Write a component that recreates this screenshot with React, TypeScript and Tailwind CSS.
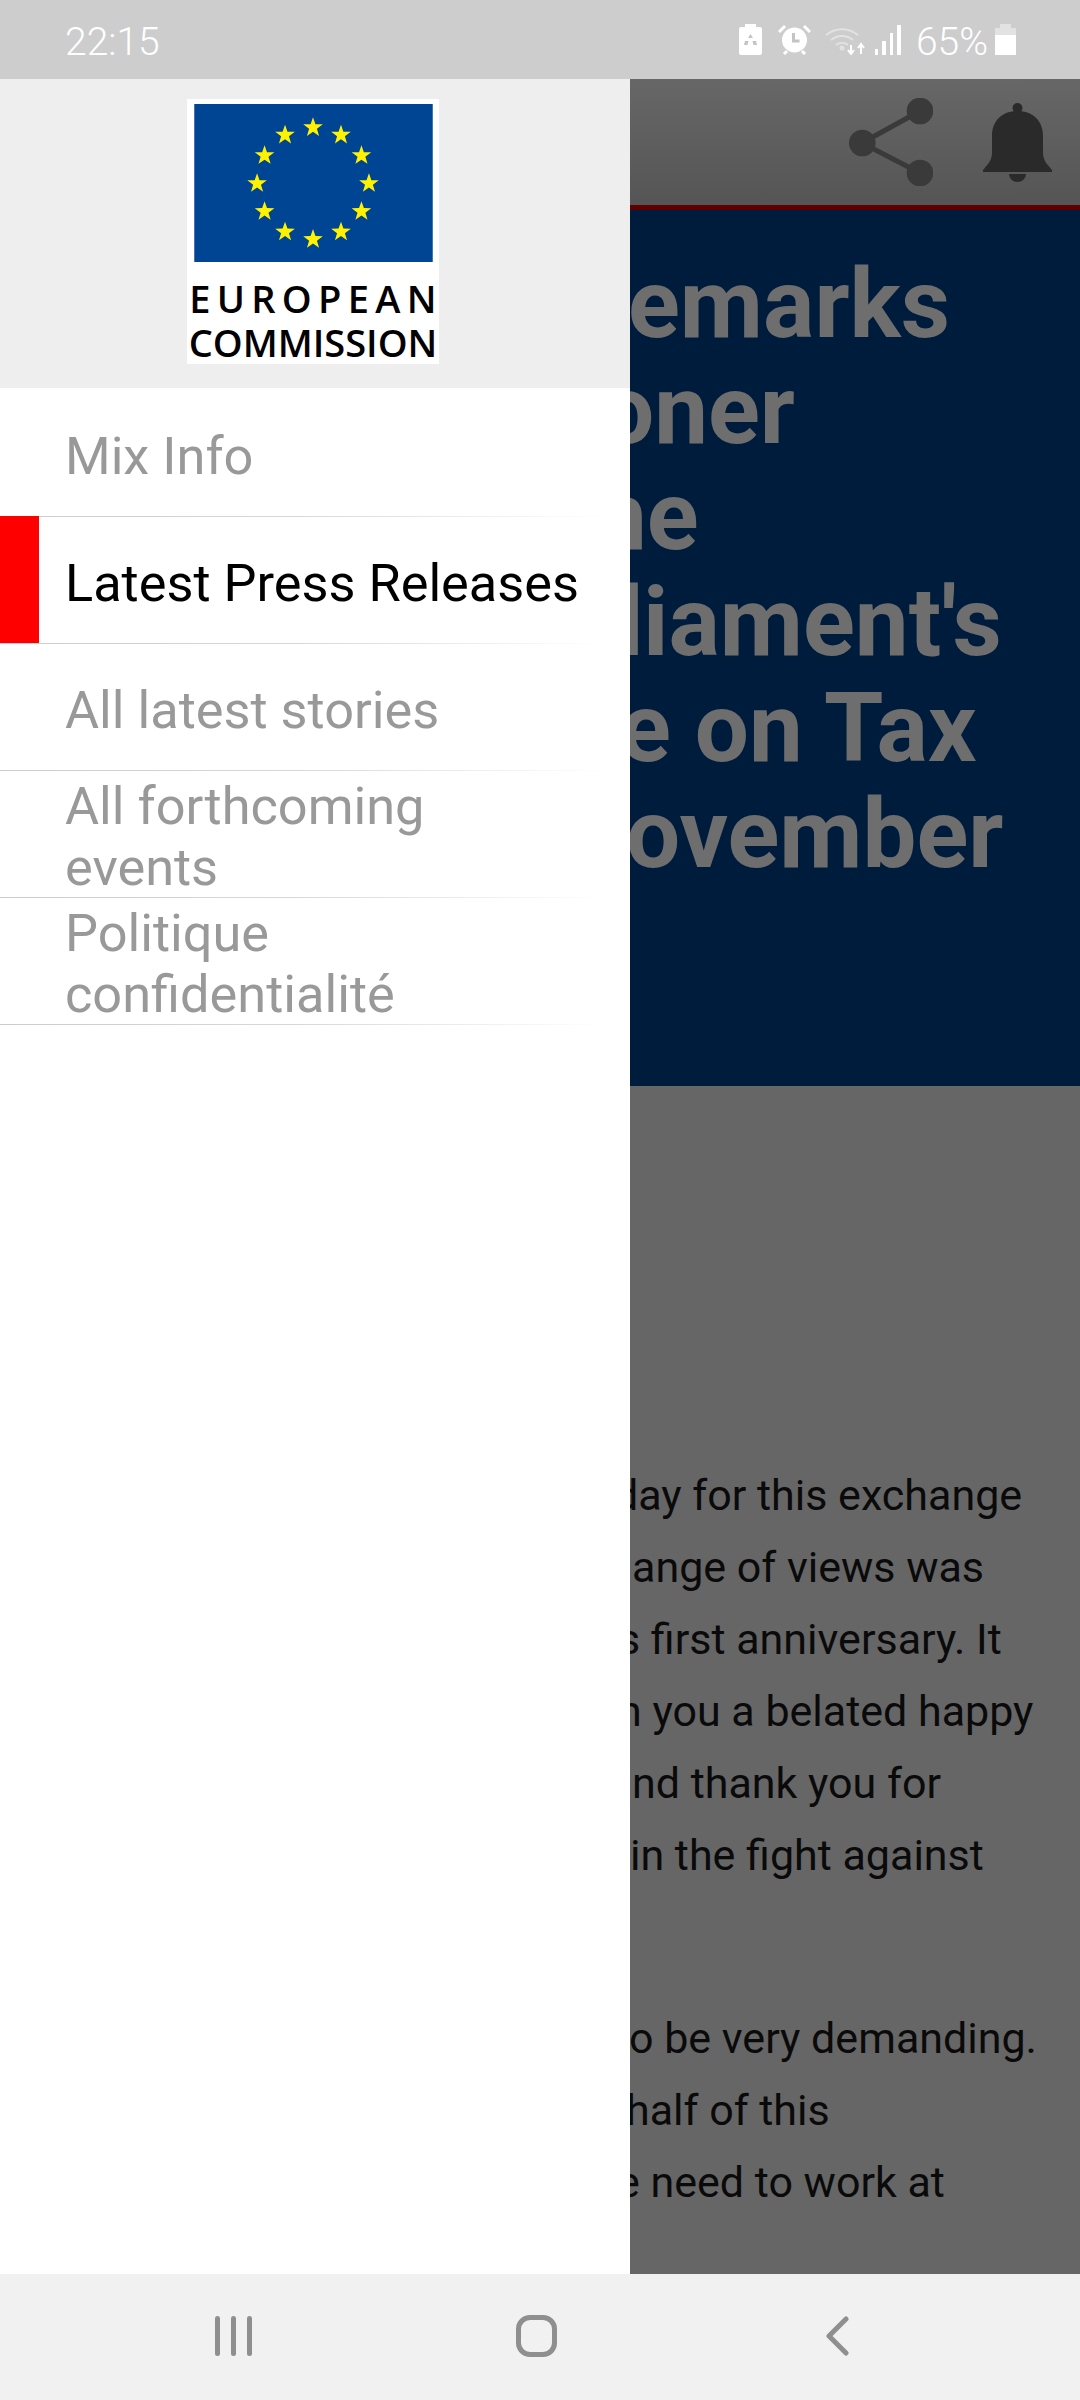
const menuItems = [
  { label: "Mix Info", active: false },
  { label: "Latest Press Releases", active: true },
  { label: "All latest stories", active: false },
  { label: "All forthcoming events", active: false },
  { label: "Politique confidentialité", active: false },
];

// the page behind the drawer, only the part that shows past its edge
const headingLines = [
  { text: "emarks", indent: "-ml-[2px]" },
  { text: "oner", indent: "-ml-[30px]" },
  { text: "ne", indent: "-ml-[37px]" },
  { text: "diament's", indent: "-ml-[41px]" },
  { text: "e on Tax", indent: "-ml-[11px]" },
  { text: "ovember", indent: "-ml-[4px]" },
];

const bodyFirst = [
  { text: "day for this exchange", indent: "-ml-[16px]" },
  { text: "ange of views was", indent: "ml-[2px]" },
  { text: "s first anniversary. It", indent: "-ml-[12px]" },
  { text: "n you a belated happy", indent: "-ml-[12px]" },
  { text: "nd thank you for", indent: "ml-[2px]" },
  { text: "in the fight against", indent: "ml-0" },
];

const bodySecond = [
  { text: "o be very demanding.", indent: "-ml-px" },
  { text: "half of this", indent: "-ml-[4px]" },
  { text: "e need to work at", indent: "-ml-[13px]" },
];

const starAngles = [0, 30, 60, 90, 120, 150, 180, 210, 240, 270, 300, 330];

const EuFlag = () => (
  <svg viewBox="0 0 243 161" className="w-[243px] h-[161px] block">
    <rect width="243" height="161" fill="#004494" />
    {starAngles.map((angle) => {
      const rad = (angle * Math.PI) / 180;
      const cx = 121 + 57 * Math.sin(rad);
      const cy = 81 - 57 * Math.cos(rad);
      return (
        <polygon
          key={angle}
          transform={`translate(${cx} ${cy}) scale(10.5)`}
          points="0,-1 0.235,-0.324 0.951,-0.309 0.38,0.124 0.588,0.809 0,0.4 -0.588,0.809 -0.38,0.124 -0.951,-0.309 -0.235,-0.324"
          fill="#fff200"
        />
      );
    })}
  </svg>
);

const StatusIcons = () => (
  <div className="flex items-center">
    <svg viewBox="0 0 23 31" className="w-[23px] h-[31px] mr-[16px]" fill="#fff">
      <path d="M6 0h11v3h4a2 2 0 0 1 2 2v24a2 2 0 0 1-2 2H2a2 2 0 0 1-2-2V5a2 2 0 0 1 2-2h4z" />
      <path d="M11.500 10l2.500 4h-5zM6 17h3.500l-1 4H5zM17 17h-3.500l1 4H18z" fill="#c4c4c4" />
    </svg>
    <svg viewBox="0 0 33 31" className="w-[33px] h-[31px] mr-[14px]">
      <circle cx="16.500" cy="16" r="12.500" fill="#fff" />
      <path d="M15.500 9v8h6" stroke="#c4c4c4" strokeWidth="3" fill="none" />
      <path d="M1 8l6-6M32 8l-6-6M6 30l3-3M27 30l-3-3" stroke="#fff" strokeWidth="3" />
    </svg>
    <svg viewBox="0 0 40 31" className="w-[40px] h-[31px] mr-[10px]" fill="none">
      <path d="M1 11a25 25 0 0 1 32 0" stroke="#e2e2e2" strokeWidth="2" />
      <path d="M6 16a17 17 0 0 1 22 0" stroke="#e2e2e2" strokeWidth="2" />
      <path d="M11 21a9 9 0 0 1 12 0" stroke="#e2e2e2" strokeWidth="2" />
      <circle cx="17" cy="24" r="2.500" fill="#e2e2e2" />
      <path d="M26 21v9M23 26l3 4 3-4" stroke="#fff" strokeWidth="2" />
      <path d="M36 30v-9M33 24l3-4 3 4" stroke="#fff" strokeWidth="2" />
    </svg>
    <div className="flex items-end gap-[4px] h-[30px] mr-[15px]">
      <div className="w-[3.500px] h-[6px] bg-white" />
      <div className="w-[3.500px] h-[14px] bg-white" />
      <div className="w-[3.500px] h-[22px] bg-white" />
      <div className="w-[3.500px] h-[30px] bg-white" />
    </div>
    <span className="text-[39px] leading-none pt-[5px] text-white font-light mr-[7px]">65%</span>
    <div className="flex flex-col items-center w-[21px]">
      <div className="w-[11px] h-[4px] bg-[#e2e2e2]" />
      <div className="w-[21px] h-[7px] bg-[#e2e2e2]" />
      <div className="w-[21px] h-[20px] bg-white" />
    </div>
  </div>
);

const MenuRow = ({ label, active }: { label: string; active: boolean }) => (
  <div className="relative flex items-center h-[127px] pl-[65px] pr-[120px] pt-[5px]">
    {active && <div className="absolute left-0 -top-px bottom-px w-[39px] bg-[#ff0000]" />}
    <span
      className={`text-[52.300px] leading-[61px] ${active ? "text-black whitespace-nowrap" : "text-[#999999]"}`}
    >
      {label}
    </span>
    <div className="absolute left-0 bottom-0 w-[605px] h-px bg-gradient-to-r from-[#cccccc] via-[#d8d8d8] to-white" />
  </div>
);

export default function App() {
  return (
    <div className="relative w-[1080px] h-[2400px] overflow-hidden flex flex-col bg-[#666666] font-[Roboto,sans-serif]">
      <div className="h-[79px] shrink-0 flex items-center justify-between pl-[65px] pr-[64px] bg-[#cdcdcd]">
        <span className="text-[39px] font-light text-white leading-none pt-[5px]">22:15</span>
        <StatusIcons />
      </div>

      <div className="flex-1 flex min-h-0">
        {/* drawer */}
        <div className="w-[630px] shrink-0 flex flex-col bg-white">
          <div className="h-[309px] flex justify-center items-center pr-[4px] pb-[4px] bg-[#eeeeee]">
            <div className="w-[252px] h-[265px] bg-white flex flex-col items-center pt-[5px] font-['Open_Sans',sans-serif] text-black font-semibold">
              <EuFlag />
              <div className="mt-[14px] text-[38px] leading-[44px] tracking-[6.300px] -mr-[6px] whitespace-nowrap">
                EUROPEAN
              </div>
              <div className="text-[38px] leading-[44px] whitespace-nowrap">COMMISSION</div>
            </div>
          </div>
          <div className="pt-[2px]">
            {menuItems.map((item) => (
              <MenuRow key={item.label} label={item.label} active={item.active} />
            ))}
          </div>
        </div>

        {/* page behind the scrim */}
        <div className="flex-1 min-w-0 flex flex-col overflow-hidden">
          <div className="h-[126px] shrink-0 flex items-center justify-end pr-[28px] bg-gradient-to-b from-[#676767] to-[#555555]">
            <svg viewBox="0 0 84 88" className="w-[84px] h-[88px] mr-[50px]">
              <path d="M71 13L13 45l58 30" stroke="#3a3a3a" strokeWidth="5" fill="none" />
              <circle cx="71" cy="13" r="13.300" fill="#3a3a3a" />
              <circle cx="13.300" cy="45" r="13.300" fill="#3a3a3a" />
              <circle cx="71" cy="75" r="13.300" fill="#3a3a3a" />
            </svg>
            <svg viewBox="0 0 69 79" className="w-[69px] h-[79px]" fill="#2a2a2a">
              <circle cx="34.500" cy="5" r="5" />
              <path d="M34.500 8C19 8 9 18 9 33v17c0 8-5 12-9 17v2h69v-2c-4-5-9-9-9-17V33C60 18 50 8 34.500 8z" />
              <path d="M26 71h17a8.500 8 0 0 1-17 0z" />
            </svg>
          </div>
          <div className="h-[5px] shrink-0 bg-[#5f0000]" />
          <div className="h-[876px] shrink-0 bg-[#001c3d] pt-[41px] text-[96px] leading-[106px] font-bold text-[#6e6e6e] whitespace-nowrap">
            {headingLines.map((line) => (
              <div key={line.text} className={line.indent}>
                {line.text}
              </div>
            ))}
          </div>
          <div className="flex-1 pt-[373px] text-[43px] leading-[72px] text-[#0a0a0a] whitespace-nowrap">
            {bodyFirst.map((line) => (
              <div key={line.text} className={line.indent}>
                {line.text}
              </div>
            ))}
            <div className="mt-[111px]">
              {bodySecond.map((line) => (
                <div key={line.text} className={line.indent}>
                  {line.text}
                </div>
              ))}
            </div>
          </div>
        </div>
      </div>

      <div className="h-[126px] shrink-0 flex items-center pl-[215px] bg-[#f1f1f1]">
        <div className="flex gap-[11px] h-[40px] -mt-[2px]">
          <div className="w-[5px] h-full rounded-full bg-[#8f8f8f]" />
          <div className="w-[5px] h-full rounded-full bg-[#8f8f8f]" />
          <div className="w-[5px] h-full rounded-full bg-[#8f8f8f]" />
        </div>
        <div className="ml-[264px] w-[41px] h-[42px] -mt-[2px] rounded-[14px] border-[5px] border-[#8f8f8f]" />
        <svg viewBox="0 0 24 40" className="ml-[268px] w-[24px] h-[40px] -mt-[2px]" fill="none">
          <path d="M21 3L4 20l17 17" stroke="#8f8f8f" strokeWidth="5" strokeLinecap="round" strokeLinejoin="round" />
        </svg>
      </div>
    </div>
  );
}
